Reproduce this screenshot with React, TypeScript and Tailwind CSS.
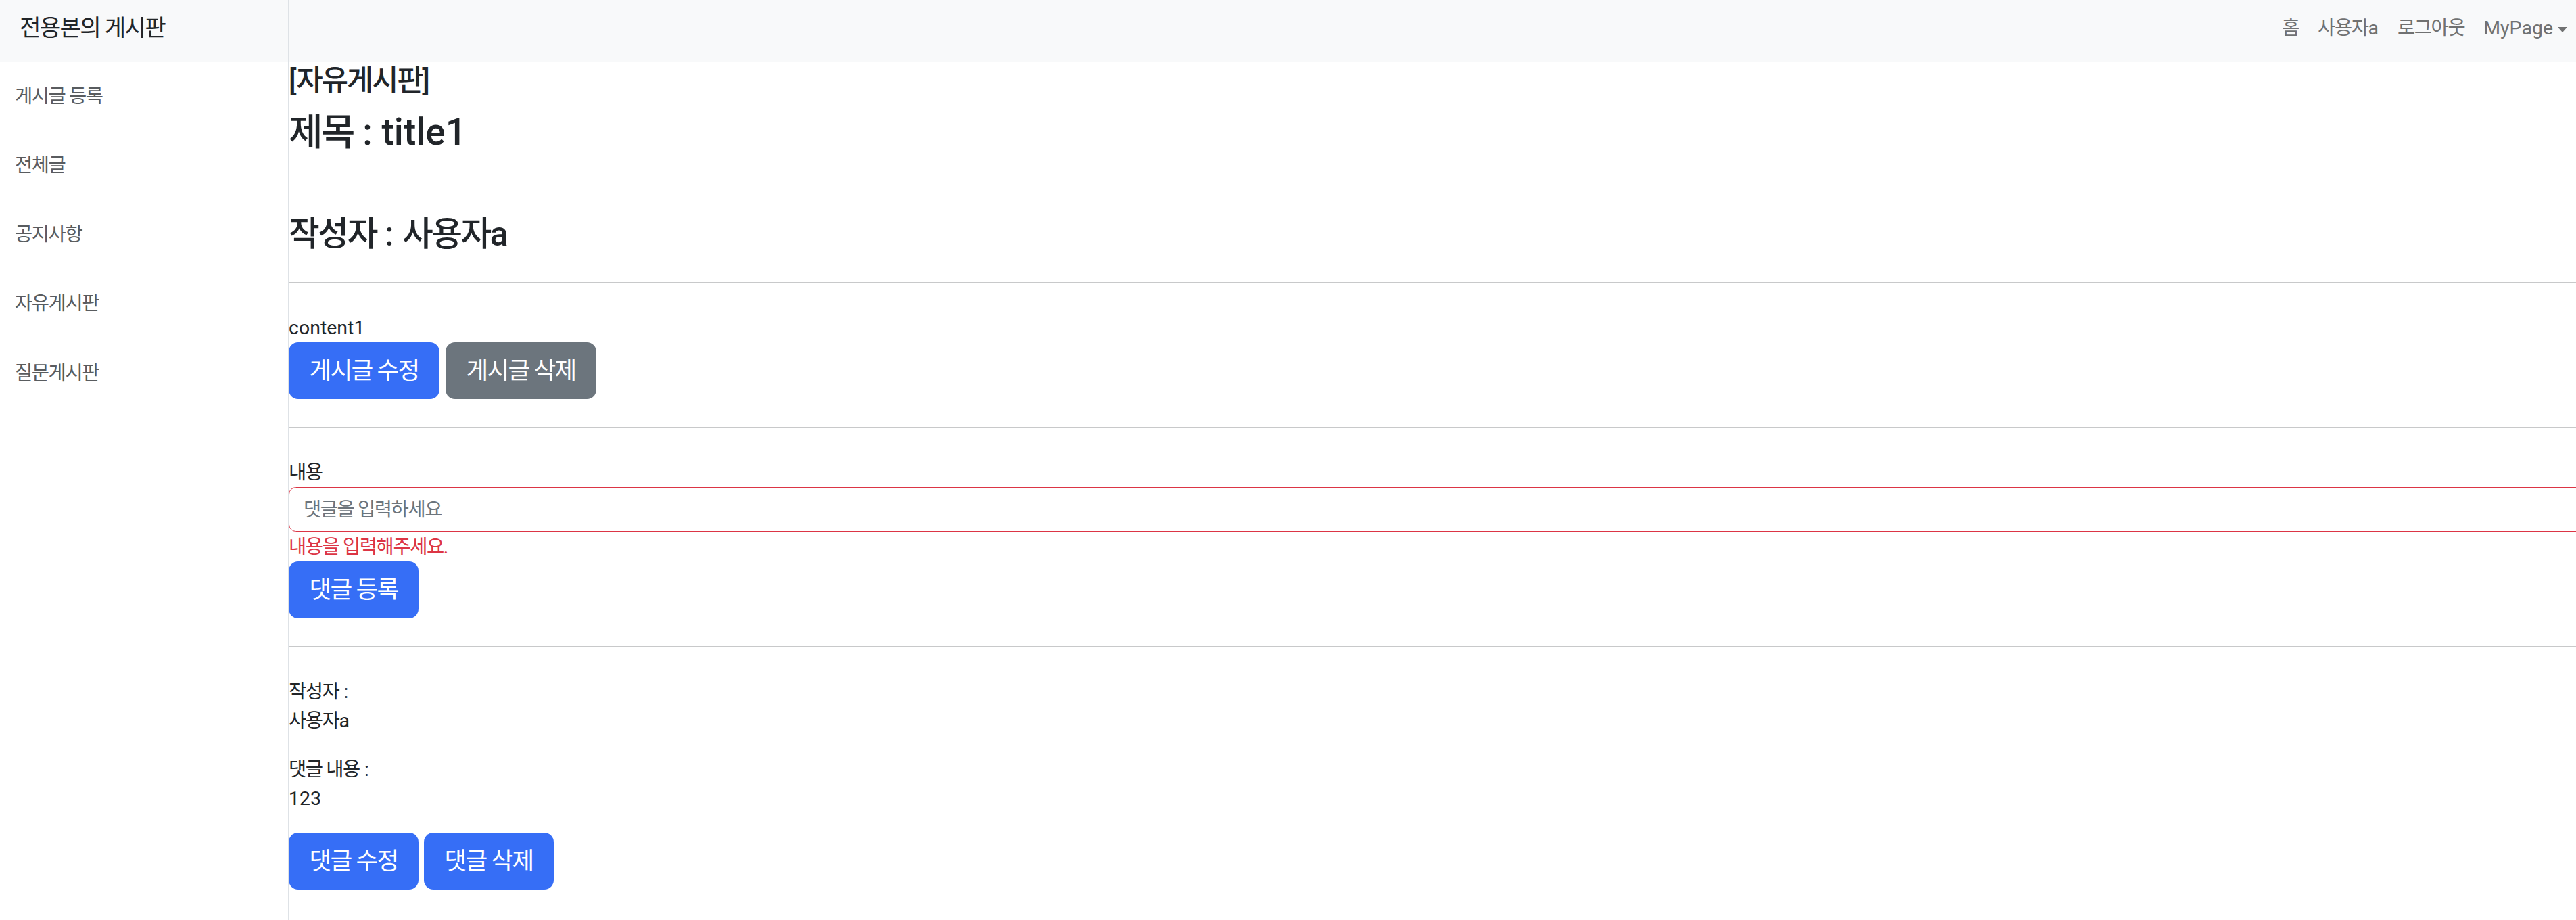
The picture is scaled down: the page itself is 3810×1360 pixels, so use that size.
import React from 'react';

// Korean runs: the reference font has narrower Hangul than Noto Sans CJK
const K: React.FC<{ children: React.ReactNode }> = ({ children }) => (
  <span className="tracking-[-0.05em]">{children}</span>
);

const menuItems = ['게시글 등록', '전체글', '공지사항', '자유게시판', '질문게시판'];

const Divider = () => <div className="mt-[41px] mb-[45px] h-px bg-[#c8c9ca]" />;

const Button: React.FC<{ label: string; width: string; gray?: boolean }> = ({ label, width, gray }) => (
  <button
    className={`${width} h-[84px] rounded-[14px] text-[35.6px] leading-[53px] text-white flex items-center justify-center ${
      gray ? 'bg-[#6c757d]' : 'bg-[#366ef6]'
    }`}
  >
    <K>{label}</K>
  </button>
);

const App: React.FC = () => {
  return (
    <div className="flex h-[1360px] w-full overflow-hidden bg-white font-[Roboto,'Noto_Sans_CJK_KR',sans-serif] text-[28.5px] leading-[43px] text-[#212529]">
      {/* Sidebar */}
      <aside className="w-[427px] shrink-0 border-r border-[#dee2e6]">
        <div className="h-[92px] flex items-center pl-[29px] pb-[8px] bg-[#f8f9fa] border-b border-[#dee2e6] text-[34.2px] text-[#212529]">
          <K>전용본의 게시판</K>
        </div>
        <div>
          {menuItems.map((item) => (
            <div
              key={item}
              className="h-[102px] flex items-center pl-[22px] text-[#595c5f] border-b border-[#dee2e6] last:border-b-0"
            >
              <K>{item}</K>
            </div>
          ))}
        </div>
      </aside>

      {/* Page content */}
      <div className="flex-1 min-w-0 flex flex-col">
        <nav className="h-[92px] shrink-0 flex items-center justify-end pb-[8px] bg-[#f8f9fa] border-b border-[#dee2e6] text-[#707172]">
          <a className="px-[14px]"><K>홈</K></a>
          <a className="px-[14px]"><K>사용자</K>a</a>
          <a className="px-[14px]"><K>로그아웃</K></a>
          <a className="pl-[14px] pr-[13px] flex items-center">
            MyPage
            <span className="ml-[7px] mt-[4px] w-0 h-0 border-t-[8px] border-t-[#707172] border-x-[7.5px] border-x-transparent" />
          </a>
        </nav>

        <main className="pt-[2px]">
          <h4 className="text-[42.7px] leading-[51px] font-medium">
            [<K>자유게시판</K>]
          </h4>
          <h2 className="mt-[16px] text-[55px] leading-[68px] font-medium">
            <K>제목</K> : title1
          </h2>

          <Divider />

          <h3 className="text-[49.8px] leading-[60px] font-medium">
            <K>작성자</K> : <K>사용자</K>a
          </h3>

          <Divider />

          <p>content1</p>
          <div className="flex gap-[9px]">
            <Button label="게시글 수정" width="w-[223px]" />
            <Button label="게시글 삭제" width="w-[223px]" gray />
          </div>

          <Divider />

          <div>
            <label className="block">
              <K>내용</K>
            </label>
            <div className="mr-[-40px]">
              <input
                className="block w-full h-[66px] px-[21px] rounded-[10.7px] border border-[#dc3545] bg-white text-[28.5px] tracking-[-0.05em] outline-none placeholder:text-[#6c757d]"
                placeholder="댓글을 입력하세요"
              />
            </div>
            <div className="mt-px text-[#dc3545]">
              <K>내용을 입력해주세요</K>.
            </div>
            <Button label="댓글 등록" width="w-[192px]" />
          </div>

          <Divider />

          <p className="mb-[29px]">
            <K>작성자</K> :
            <br />
            <K>사용자</K>a
          </p>
          <p className="mb-[29px]">
            <K>댓글 내용</K> :
            <br />
            123
          </p>
          <div className="flex gap-[8px]">
            <Button label="댓글 수정" width="w-[192px]" />
            <Button label="댓글 삭제" width="w-[192px]" />
          </div>
        </main>
      </div>
    </div>
  );
};

export default App;
